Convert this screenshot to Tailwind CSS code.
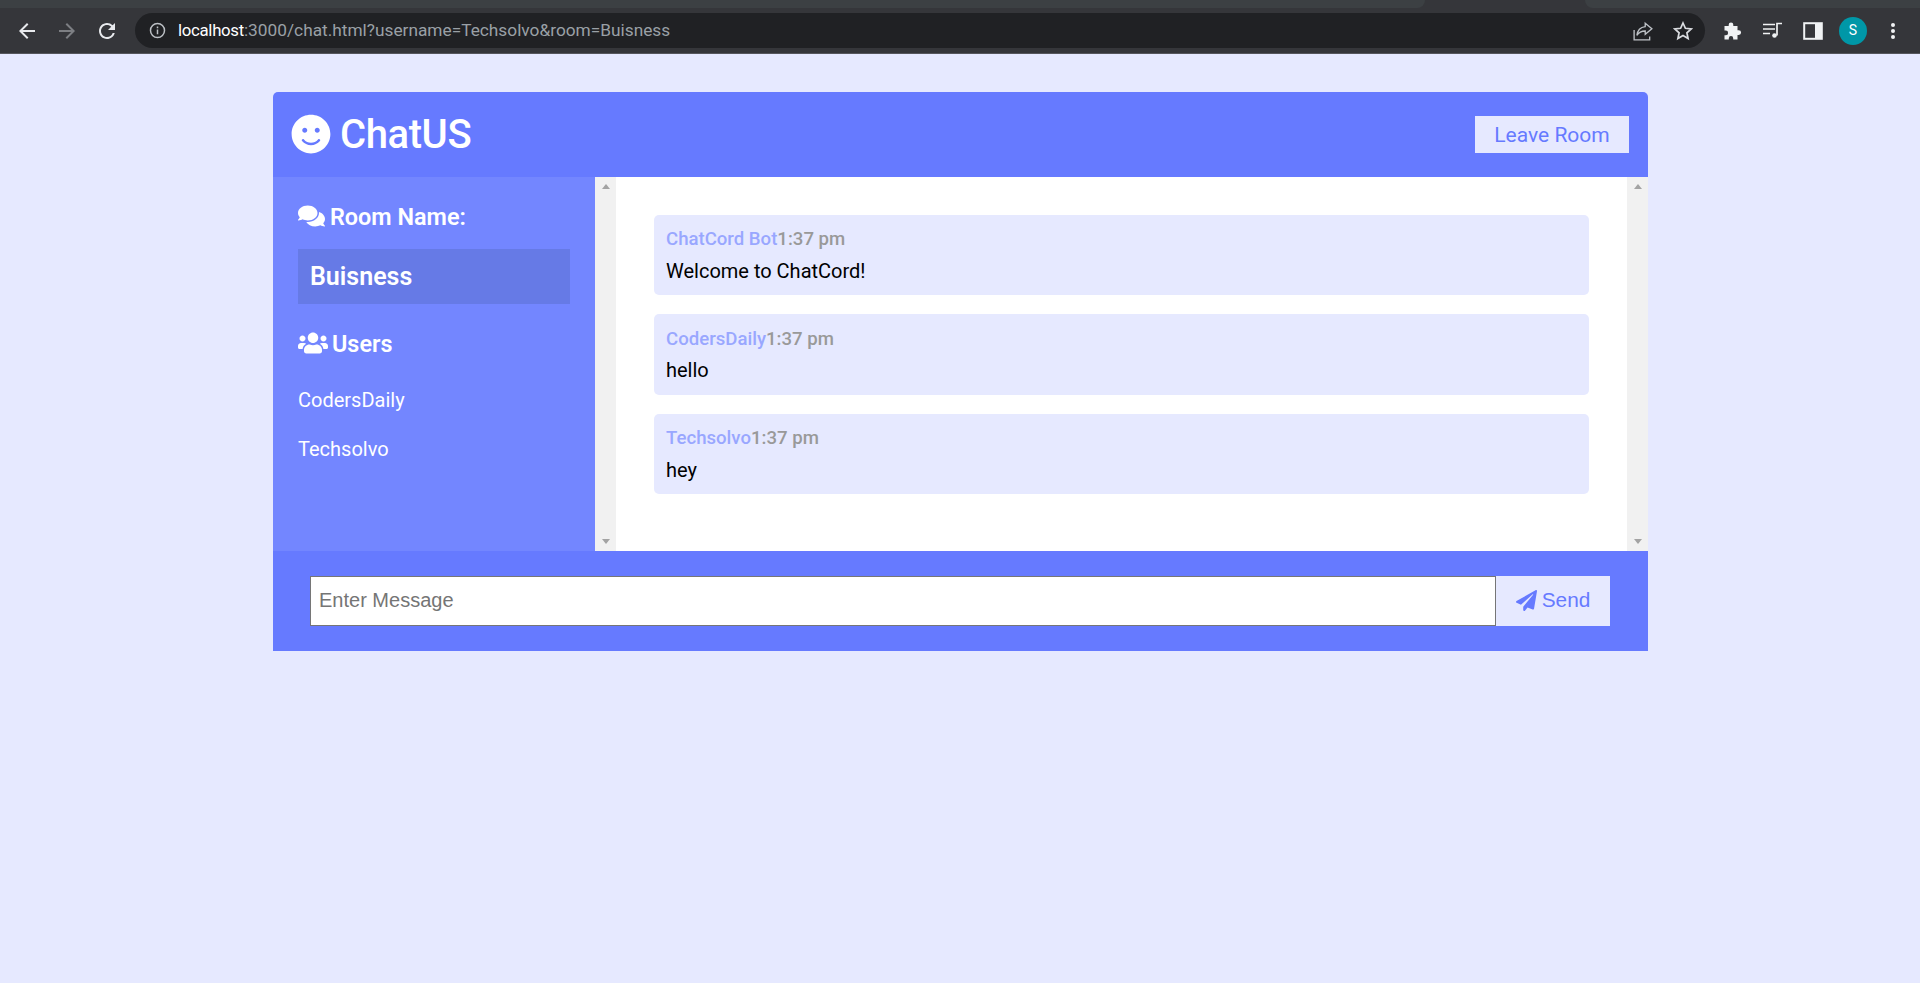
<!DOCTYPE html>
<html lang="en">
<head>
    <meta charset="UTF-8">
    <title>ChatUS</title>
    <script src="https://cdn.jsdelivr.net/npm/@tailwindcss/browser@4"></script>
</head>
<body class="bg-[#e6e9ff] h-[983px] overflow-hidden font-['Roboto',sans-serif]">
    <!-- Browser toolbar -->
    <div class="h-[54px] bg-[#35363a] border-b border-[#55565c] flex flex-col">
        <div class="h-2 flex">
            <div class="w-[1425px] bg-[#3c4043] rounded-br-lg"></div>
            <div class="w-[160px]"></div>
            <div class="flex-1 bg-[#3c4043] rounded-bl-lg"></div>
        </div>
        <div class="flex-1 flex items-start">
            <div class="flex items-center w-[135px] h-[35px] mt-[5px] pl-[15px] gap-4">
                <svg class="w-6 h-6" viewBox="0 0 24 24" fill="#e8eaed"><path d="M20 11H7.830l5.590-5.590L12 4l-8 8 8 8 1.410-1.410L7.830 13H20v-2z"/></svg>
                <svg class="w-6 h-6" viewBox="0 0 24 24" fill="#7d7f83"><path d="M4 11h12.170l-5.590-5.590L12 4l8 8-8 8-1.410-1.410L16.170 13H4v-2z"/></svg>
                <svg class="w-6 h-6" viewBox="0 0 24 24" fill="#e8eaed"><path d="M17.650 6.350A7.958 7.958 0 0 0 12 4c-4.420 0-7.990 3.580-7.990 8s3.570 8 7.990 8c3.730 0 6.840-2.550 7.730-6h-2.080A5.990 5.990 0 0 1 12 18c-3.310 0-6-2.690-6-6s2.690-6 6-6c1.660 0 3.140.69 4.220 1.780L13 11h7V4l-2.350 2.350z"/></svg>
            </div>
            <div class="w-[1570px] h-[35px] mt-[5px] bg-[#202124] rounded-full flex items-center pl-[14px] pr-3 text-[17.300px]">
                <svg class="w-[17px] h-[17px] mr-3" viewBox="0 0 16 16" fill="none" stroke="#bdc1c6" stroke-width="1.400"><circle cx="8" cy="8" r="6.600"/><path d="M8 7v4.500M8 4.200v1.600"/></svg>
                <span class="text-white text-[16.800px] tracking-[-0.3px]">localhost</span><span class="text-[#9aa0a6]">:3000/chat.html?username=Techsolvo&amp;room=Buisness</span>
                <div class="ml-auto flex items-center gap-[20px]">
                    <svg class="w-[20px] h-[20px]" viewBox="0 0 18 18" fill="none" stroke="#bdc1c6" stroke-width="1.200"><path d="M1 8v9h14v-3"/><path d="M11 2l6 5-6 5V9C7 9 5 10.500 3.500 13 4 8.500 6.500 5.500 11 5z"/></svg>
                    <svg class="w-[20px] h-[20px]" viewBox="0 0 20 20" fill="none" stroke="#dadce0" stroke-width="1.700"><path d="M10 2l2.400 5.300 5.800.6-4.300 3.900 1.200 5.700L10 14.600 4.900 17.500l1.200-5.700L1.800 7.900l5.800-.6z"/></svg>
                </div>
            </div>
            <div class="flex items-center h-[35px] mt-[5px] pl-2">
                <div class="w-10 flex justify-center"><svg class="w-[20px] h-[20px]" viewBox="0 0 20 20" fill="#f1f3f4"><path d="M8 1.500a2.300 2.300 0 0 1 2.300 2.300V5h4.200v4.200h1.200a2.400 2.400 0 0 1 0 4.800h-1.200v4.500h-4.300v-1.300a2.200 2.200 0 0 0-4.400 0v1.300H1.500v-4.300h1.300a2.300 2.300 0 0 0 0-4.600H1.500V5h4.200V3.800A2.300 2.300 0 0 1 8 1.500z"/></svg></div>
                <div class="w-10 flex justify-center"><svg class="w-[20px] h-[20px]" viewBox="0 0 20 20" fill="none" stroke="#f1f3f4" stroke-width="1.700"><path d="M0 3.500h12M0 8h12M0 12.500h7"/><path d="M14 14.500V2.500h5"/><circle cx="11.500" cy="14.500" r="2.300" fill="#f1f3f4" stroke="none"/></svg></div>
                <div class="w-10 flex justify-center"><svg class="w-[20px] h-[20px]" viewBox="0 0 20 20" fill="none"><rect x="1.200" y="2.200" width="17.600" height="15.600" stroke="#f1f3f4" stroke-width="2"/><rect x="12" y="2" width="7" height="16" fill="#f1f3f4"/></svg></div>
                <div class="w-10 flex justify-center"><div class="w-7 h-7 rounded-full bg-[#0097a7] text-white text-[14px] flex items-center justify-center">S</div></div>
                <div class="w-10 flex justify-center"><svg class="w-[6px] h-[18px]" viewBox="0 0 6 18" fill="#f1f3f4"><circle cx="3" cy="3" r="2"/><circle cx="3" cy="9" r="2"/><circle cx="3" cy="15" r="2"/></svg></div>
            </div>
        </div>
    </div>

    <!-- Chat app -->
    <div class="w-[1375px] ml-[273px] mt-[38px]">
        <header class="h-[85px] bg-[#667aff] rounded-t-[5px] flex items-center justify-between pl-[18px] pr-[19px] text-white">
            <h1 class="flex items-center gap-[9px] text-[40px] font-medium leading-none tracking-[-0.4px] -mt-[2px]">
                <svg class="w-[40px] h-[40px]" viewBox="0 0 496 512" fill="#fff"><path d="M248 8C111 8 0 119 0 256s111 248 248 248 248-111 248-248S385 8 248 8zm80 168c17.700 0 32 14.300 32 32s-14.300 32-32 32-32-14.300-32-32 14.300-32 32-32zm-160 0c17.700 0 32 14.300 32 32s-14.300 32-32 32-32-14.300-32-32 14.300-32 32-32zm194.800 170.200C334.300 380.400 292.500 400 248 400s-86.300-19.600-114.800-53.800c-13.600-16.300 11-36.700 24.600-20.500 22.400 26.900 55.200 42.200 90.200 42.200s67.800-15.400 90.200-42.200c13.400-16.200 38.100 4.200 24.600 20.500z"/></svg>
                <span class="mt-[3px]">ChatUS</span>
            </h1>
            <a class="w-[154px] h-[37px] bg-[#e6e9ff] text-[#667aff] text-[21px] flex items-center justify-center pt-[2px]">Leave Room</a>
        </header>

        <main class="flex h-[374px]">
            <aside class="w-[322px] bg-[#7386ff] text-white px-[25px] pt-[25px]">
                <h3 class="flex items-center gap-[5px] text-[23.400px] font-semibold leading-[30px]">
                    <svg class="w-[27px] h-[24px] -mt-[2px]" viewBox="0 0 576 512" fill="#fff"><path d="M416 192c0-88.400-93.100-160-208-160S0 103.600 0 192c0 34.300 14.100 65.900 38 92-13.400 30.200-35.500 54.200-35.800 54.500-2.200 2.300-2.800 5.700-1.500 8.700S4.800 352 8 352c36.600 0 66.900-12.300 88.700-25 32.200 15.700 70.300 25 111.300 25 114.900 0 208-71.600 208-160zm122 220c23.900-26 38-57.700 38-92 0-66.900-53.500-124.200-129.300-148.100.9 6.600 1.300 13.300 1.300 20.100 0 105.900-107.700 192-240 192-10.800 0-21.300-.8-31.700-1.900C207.800 439.600 281.800 480 368 480c41 0 79.100-9.200 111.300-25 21.800 12.700 52.100 25 88.700 25 3.200 0 6.100-1.900 7.300-4.800 1.300-2.900.7-6.300-1.500-8.700-.3-.3-22.400-24.200-35.800-54.500z"/></svg>
                    Room Name:
                </h3>
                <h2 class="mt-[17px] h-[55px] bg-[#667ae6] px-3 flex items-center text-[25px] font-semibold">Buisness</h2>
                <h3 class="mt-[25px] flex items-center gap-1 text-[23.400px] font-semibold leading-[30px]">
                    <svg class="w-[30px] h-[24px] -mt-[2px]" viewBox="0 0 640 512" fill="#fff"><path d="M96 224c35.300 0 64-28.700 64-64s-28.700-64-64-64-64 28.700-64 64 28.700 64 64 64zm448 0c35.300 0 64-28.700 64-64s-28.700-64-64-64-64 28.700-64 64 28.700 64 64 64zm32 32h-64c-17.600 0-33.500 7.100-45.100 18.600 40.300 22.100 68.900 62 75.100 109.400h66c17.700 0 32-14.300 32-32v-32c0-35.300-28.700-64-64-64zm-256 0c61.900 0 112-50.100 112-112S381.900 32 320 32 208 82.100 208 144s50.100 112 112 112zm76.800 32h-8.300c-20.800 10-43.900 16-68.500 16s-47.600-6-68.500-16h-8.300C179.600 288 128 339.600 128 403.200V432c0 26.500 21.500 48 48 48h288c26.500 0 48-21.500 48-48v-28.800c0-63.600-51.600-115.200-115.200-115.200zm-223.700-13.400C161.500 263.100 145.600 256 128 256H64c-35.300 0-64 28.700-64 64v32c0 17.700 14.300 32 32 32h65.900c6.300-47.400 34.900-87.300 75.200-109.400z"/></svg>
                    Users
                </h3>
                <ul class="mt-[29px] text-[20px] leading-[25px] flex flex-col gap-[24px]">
                    <li>CodersDaily</li>
                    <li>Techsolvo</li>
                </ul>
            </aside>
            <div class="w-[21px] bg-[#f1f1f1] flex flex-col items-center justify-between py-[7px]">
                <div class="w-0 h-0 border-x-[4.500px] border-x-transparent border-b-[5px] border-b-[#a3a3a3]"></div>
                <div class="w-0 h-0 border-x-[4.500px] border-x-transparent border-t-[5px] border-t-[#a3a3a3]"></div>
            </div>
            <div class="flex-1 bg-white px-[38px] pt-[38px] flex flex-col gap-[19px]">
                <div class="h-[80px] bg-[#e6e9ff] rounded-[5px] px-3 pt-[11px]">
                    <p class="text-[18.600px] font-medium leading-[27px] text-[#99a7ff]">ChatCord Bot<span class="text-[#999999]">1:37 pm</span></p>
                    <p class="text-[20px] leading-[27px] mt-[5px] text-black">Welcome to ChatCord!</p>
                </div>
                <div class="h-[81px] bg-[#e6e9ff] rounded-[5px] px-3 pt-[12px]">
                    <p class="text-[18.600px] font-medium leading-[27px] text-[#99a7ff]">CodersDaily<span class="text-[#999999]">1:37 pm</span></p>
                    <p class="text-[20px] leading-[27px] mt-[4px] text-black">hello</p>
                </div>
                <div class="h-[80px] bg-[#e6e9ff] rounded-[5px] px-3 pt-[11px]">
                    <p class="text-[18.600px] font-medium leading-[27px] text-[#99a7ff]">Techsolvo<span class="text-[#999999]">1:37 pm</span></p>
                    <p class="text-[20px] leading-[27px] mt-[5px] text-black">hey</p>
                </div>
            </div>
            <div class="w-[21px] bg-[#f1f1f1] flex flex-col items-center justify-between py-[7px]">
                <div class="w-0 h-0 border-x-[4.500px] border-x-transparent border-b-[5px] border-b-[#a3a3a3]"></div>
                <div class="w-0 h-0 border-x-[4.500px] border-x-transparent border-t-[5px] border-t-[#a3a3a3]"></div>
            </div>
        </main>

        <form class="h-[100px] bg-[#667aff] flex items-center pl-[37px]">
            <input type="text" placeholder="Enter Message" class="w-[1186px] h-[50px] bg-white border border-[#767676] px-2 pb-[2px] text-[20px] font-['Liberation_Sans',sans-serif] placeholder:text-[#757575]">
            <button type="button" class="w-[114px] h-[50px] bg-[#e6e9ff] text-[#667aff] text-[20.800px] pb-[2px] flex items-center justify-center gap-[5px] font-['Liberation_Sans',sans-serif]">
                <svg class="w-[21px] h-[21px]" viewBox="0 0 512 512" fill="#667aff"><path d="M476 3.200L12.500 270.600c-18.100 10.400-15.800 35.600 2.200 43.200L121 358.400l287.300-253.200c5.500-4.900 13.300 2.600 8.600 8.300L176 407v80.500c0 23.600 28.500 32.900 42.500 15.800L282 426l124.600 52.200c14.200 6 30.400-2.900 33-18.200l72-432C515 7.800 493.300-6.800 476 3.200z"/></svg>
                Send
            </button>
        </form>
    </div>
</body>
</html>
